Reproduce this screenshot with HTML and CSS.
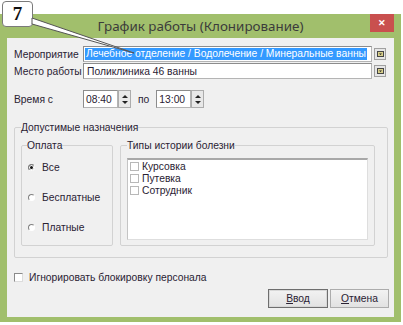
FILE: index.html
```html
<!DOCTYPE html>
<html lang="ru">
<head>
  <meta charset="UTF-8">
  <title>График работы (Клонирование)</title>
  <link rel="stylesheet" href="styles.css">
</head>
<body>
  <div class="window">
    <div class="titlebar">
      <span></span>
      <span class="title">График работы (Клонирование)</span>
      <span class="close">&#x2715;</span>
    </div>
    <div class="client">
      <div class="row">
        <span class="row-label">Мероприятие</span>
        <div class="field combo"><span class="selected">Лечебное отделение / Водолечение / Минеральные ванны</span></div>
        <span class="pick"><svg width="7" height="6" viewBox="0 0 7 6"><rect x="0.5" y="0.5" width="6" height="5" fill="#d8cf8a" stroke="#444"/><path d="M2 2.5h3L3.5 4z" fill="#222"/></svg></span>
      </div>
      <div class="row row-place">
        <span class="row-label">Место работы</span>
        <div class="field combo"><span class="value">Поликлиника 46 ванны</span></div>
        <span class="pick"><svg width="7" height="6" viewBox="0 0 7 6"><rect x="0.5" y="0.5" width="6" height="5" fill="#d8cf8a" stroke="#444"/><path d="M2 2.5h3L3.5 4z" fill="#222"/></svg></span>
      </div>
      <div class="row row-time">
        <span class="row-label">Время с</span>
        <div class="spin">
          <div class="field time">08:40</div>
          <div class="spin-btns"><span class="up"></span><span class="down"></span></div>
        </div>
        <span class="to">по</span>
        <div class="spin">
          <div class="field time">13:00</div>
          <div class="spin-btns"><span class="up"></span><span class="down"></span></div>
        </div>
      </div>

      <fieldset class="group outer">
        <legend>Допустимые назначения</legend>
        <div class="groups">
          <fieldset class="group pay">
            <legend>Оплата</legend>
            <div class="radios">
              <div class="radio-row"><span class="radio checked"></span>Все</div>
              <div class="radio-row"><span class="radio"></span>Бесплатные</div>
              <div class="radio-row"><span class="radio"></span>Платные</div>
            </div>
          </fieldset>
          <fieldset class="group kinds">
            <legend>Типы истории болезни</legend>
            <div class="listbox">
              <div class="list-item"><span class="check"></span>Курсовка</div>
              <div class="list-item"><span class="check"></span>Путевка</div>
              <div class="list-item"><span class="check"></span>Сотрудник</div>
            </div>
          </fieldset>
        </div>
      </fieldset>

      <div class="row row-ignore">
        <span class="check sunken"></span>Игнорировать блокировку персонала
      </div>

      <div class="buttons">
        <button class="btn default"><u>В</u>вод</button>
        <button class="btn"><u>О</u>тмена</button>
      </div>
    </div>
  </div>

  <div class="callout">7</div>
  <svg class="pointer" width="140" height="60" viewBox="0 0 140 60">
    <polygon points="32,18 134,53 32,24" fill="#fff" stroke="#555" stroke-width="1"/>
  </svg>
</body>
</html>
```

FILE: styles.css
```css
body {
  margin: 0;
  background: #fff;
  font-family: "Liberation Sans", Arial, sans-serif;
  font-size: 10.3px;
  color: #2a2233;
}
.window {
  width: 401px;
  height: 308px;
  margin-top: 14px;
  padding: 0 7px 5px 7px;
  box-sizing: border-box;
  background: #a1bf6c;
  display: flex;
  flex-direction: column;
}
.titlebar {
  height: 24px;
  display: grid;
  grid-template-columns: 1fr auto 1fr;
}
.title {
  align-self: center;
  font-family: "Noto Sans", sans-serif;
  font-size: 13.4px;
  color: #3b3b3b;
}
.close {
  justify-self: end;
  width: 24px;
  height: 18px;
  background: #c9504e;
  color: #fff;
  font-size: 9px;
  font-weight: bold;
  display: flex;
  align-items: center;
  justify-content: center;
}
.client {
  flex: 1;
  background: #f0f0f0;
  padding: 8px 5px 0 7px;
}
.row {
  display: flex;
  align-items: center;
  white-space: nowrap;
}
.row-label {
  width: 69px;
  flex: none;
}
.field {
  box-sizing: border-box;
  background: #fff;
  border: 1px solid #b4b4b4;
  border-top-color: #8c8c8c;
  border-left-color: #8c8c8c;
}
.combo {
  width: 289px;
  height: 16px;
  padding: 1px;
  display: flex;
  align-items: center;
  overflow: hidden;
}
.selected {
  background: #3399ff;
  color: #fff;
  padding: 0 1px;
  line-height: 12px;
}
.value {
  padding-left: 2px;
}
.pick {
  margin-left: 2px;
  width: 12px;
  height: 12px;
  box-sizing: border-box;
  background: #e6e6e6;
  border: 1px solid #a0a0a0;
  display: flex;
  align-items: center;
  justify-content: center;
}
.row-place {
  margin-top: 1px;
}
.row-time {
  margin-top: 11px;
}
.spin {
  display: flex;
  height: 18px;
}
.time {
  width: 35px;
  height: 18px;
  padding-left: 2px;
  display: flex;
  align-items: center;
}
.spin-btns {
  width: 13px;
  box-sizing: border-box;
  border: 1px solid #acacac;
  background: #e8e8e8;
  display: flex;
  flex-direction: column;
  align-items: center;
  justify-content: center;
  gap: 3px;
}
.spin-btns .up,
.spin-btns .down {
  width: 0;
  height: 0;
  border-left: 3px solid transparent;
  border-right: 3px solid transparent;
}
.spin-btns .up {
  border-bottom: 3px solid #222;
}
.spin-btns .down {
  border-top: 3px solid #222;
}
.to {
  margin: 0 7px;
}
.group {
  margin: 0;
  border: 1px solid #d2d2d2;
  border-radius: 2px;
  padding: 0 6px;
}
.group legend {
  padding: 0;
  line-height: 13px;
}
.outer {
  margin-top: 13px;
  width: 374px;
  box-sizing: border-box;
  padding: 5px 6px 11px 6px;
}
.groups {
  display: flex;
  gap: 7px;
}
.pay {
  width: 92px;
  height: 107px;
  box-sizing: border-box;
  padding: 9px 5px 0 5px;
}
.radios {
  display: flex;
  flex-direction: column;
  gap: 17px;
}
.radio-row {
  display: flex;
  align-items: center;
  line-height: 13px;
}
.radio {
  width: 7px;
  height: 7px;
  margin: 0 7px 0 1px;
  border-radius: 50%;
  border: 1px solid;
  border-color: #808080 #fff #fff #808080;
  background: #fff;
  box-sizing: border-box;
}
.radio.checked {
  background: #111;
  box-shadow: inset 0 0 0 1px #fff;
}
.kinds {
  width: 255px;
  height: 107px;
  box-sizing: border-box;
  padding: 6px 6px 4px 6px;
}
.listbox {
  height: 82px;
  box-sizing: border-box;
  background: #fff;
  border: 1px solid #dedede;
  border-top: 2px solid #a8a8a8;
  border-left-color: #c4c4c4;
  padding: 0 2px;
}
.list-item {
  display: flex;
  align-items: center;
  height: 12px;
}
.check {
  width: 9px;
  height: 9px;
  box-sizing: border-box;
  margin-right: 3px;
  background: #fff;
  border: 1px solid #b8b8b8;
}
.check.sunken {
  border-color: #8a8a8a #dcdcdc #dcdcdc #8a8a8a;
  margin-right: 6px;
}
.row-ignore {
  margin-top: 13px;
  line-height: 13px;
}
.buttons {
  margin-top: 5px;
  display: flex;
  justify-content: flex-end;
  gap: 2px;
}
.btn {
  height: 19px;
  width: 59px;
  padding: 0;
  font: inherit;
  color: #2a2233;
  background: linear-gradient(#f2f2f2, #e2e2e2);
  border: 1px solid #acacac;
}
.btn.default {
  width: 60px;
  border: 1px solid #6e6e6e;
  box-shadow: inset 0 0 0 1px #d8d8d8;
}
.callout {
  position: absolute;
  left: 2px;
  top: 1px;
  width: 31px;
  height: 26px;
  box-sizing: border-box;
  background: #fff;
  border: 1px solid #7a7a7a;
  border-radius: 4px;
  font-family: "Liberation Serif", serif;
  font-weight: bold;
  font-size: 19px;
  color: #111;
  display: flex;
  align-items: center;
  justify-content: center;
}
.pointer {
  position: absolute;
  left: 0;
  top: 0;
}
```
